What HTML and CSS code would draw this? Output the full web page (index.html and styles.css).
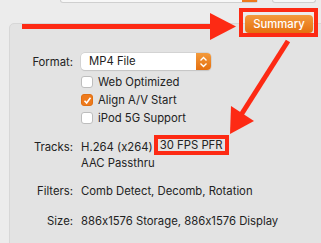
FILE: index.html
```html
<!DOCTYPE html>
<html lang="en">
<head>
    <meta charset="UTF-8">
    <title>Summary</title>
    <link rel="stylesheet" href="styles.css">
</head>
<body>
    <div class="window">
        <div class="top-row">
            <div class="stub stub-wide"><span class="stub-end"></span></div>
            <div class="stub stub-small"></div>
        </div>

        <div class="tab-row">
            <div class="tab-mark">
                <button class="tab-button">Summary</button>
            </div>
        </div>

        <div class="panel">
            <div class="row format-row">
                <span class="label">Format:</span>
                <div class="popup">
                    <span class="popup-text">MP4 File</span>
                    <span class="popup-stepper">
                        <svg width="9" height="12" viewBox="0 0 9 12">
                            <path d="M1.5 4.5 L4.5 1.5 L7.5 4.5 M1.5 7.5 L4.5 10.5 L7.5 7.5" fill="none" stroke="#fff" stroke-width="1.4"/>
                        </svg>
                    </span>
                </div>
            </div>

            <div class="checks">
                <label class="check"><span class="box"></span>Web Optimized</label>
                <label class="check"><span class="box checked">
                    <svg width="9" height="9" viewBox="0 0 9 9"><path d="M1.5 4.8 L3.6 7 L7.5 1.8" fill="none" stroke="#fff" stroke-width="1.6"/></svg>
                </span>Align A/V Start</label>
                <label class="check"><span class="box"></span>iPod 5G Support</label>
            </div>

            <div class="row info-row tracks-row">
                <span class="label">Tracks:</span>
                <div class="value">
                    <div>H.264 (x264) <span class="mark">30 FPS PFR</span></div>
                    <div>AAC Passthru</div>
                </div>
            </div>

            <div class="row info-row">
                <span class="label">Filters:</span>
                <div class="value">Comb Detect, Decomb, Rotation</div>
            </div>

            <div class="row info-row">
                <span class="label">Size:</span>
                <div class="value">886x1576 Storage, 886x1576 Display</div>
            </div>
        </div>

        <!-- annotation arrows -->
        <svg class="arrows" width="321" height="243" viewBox="0 0 321 243">
            <line x1="22" y1="26.5" x2="212" y2="26.5" stroke="#fd2a14" stroke-width="5"/>
            <polygon points="210,13 236,26.5 210,40" fill="#fd2a14"/>
            <line x1="288" y1="41" x2="241" y2="115" stroke="#fd2a14" stroke-width="5"/>
            <polygon points="231,106 254,121 230,134" fill="#fd2a14"/>
        </svg>
    </div>
</body>
</html>
```

FILE: styles.css
```css
body {
    margin: 0;
    background-color: #ececec;
    font-family: Inter, "Noto Sans", sans-serif;
    font-size: 11.3px;
    font-feature-settings: "calt" 0;
    color: #222;
}
.window {
    position: relative;
    width: 321px;
    height: 243px;
    overflow: hidden;
}
.top-row {
    display: flex;
    height: 3px;
    padding-left: 60px;
    gap: 14px;
}
.stub {
    background-color: #f7f7f7;
    border: 1px solid #cfcfcf;
    border-top: none;
    border-radius: 0 0 3px 3px;
    box-sizing: border-box;
    height: 3px;
}
.stub-wide {
    width: 198px;
    display: flex;
    justify-content: flex-end;
}
.stub-end {
    width: 15px;
    background-color: #ee7a1c;
}
.stub-small {
    width: 44px;
}
/* Tab button sits on the panel edge */
.tab-row {
    display: flex;
    justify-content: flex-end;
    padding-right: 3px;
    margin-top: 5px;
    margin-bottom: -14px;
    position: relative;
    z-index: 1;
}
.tab-mark {
    border: 4px solid #fd2a14;
    padding: 3px 1px 0 2px;
    box-sizing: border-box;
    height: 29px;
}
.tab-button {
    display: block;
    width: 68px;
    height: 18px;
    border: none;
    border-radius: 4px;
    background: linear-gradient(#f39a3c, #e5700f);
    color: white;
    font-family: Inter, sans-serif;
    font-size: 11.3px;
    font-weight: 500;
    padding: 0;
}
.panel {
    margin-left: 9px;
    margin-right: -10px;
    height: 240px;
    background-color: #e3e3e3;
    border: 1px solid #d7d7d7;
    border-radius: 5px;
    padding-top: 29px;
}
.row {
    display: flex;
    align-items: flex-start;
}
.label {
    width: 63px;
    margin-right: 8px;
    text-align: right;
    flex-shrink: 0;
}
.format-row {
    height: 17px;
    align-items: center;
}
.popup {
    display: flex;
    width: 130px;
    height: 17px;
    background-color: white;
    border-radius: 4px;
    box-shadow: 0 0 0 0.5px #c4c4c4, 0 1px 1px rgba(0, 0, 0, 0.12);
    align-items: center;
}
.popup-text {
    flex: 1;
    padding-left: 8px;
    line-height: 17px;
}
.popup-stepper {
    width: 15px;
    height: 17px;
    background: linear-gradient(#f39a3c, #e5700f);
    border-radius: 0 4px 4px 0;
    display: flex;
    align-items: center;
    justify-content: center;
}
.checks {
    margin-top: 3px;
    padding-left: 71px;
}
.check {
    display: flex;
    align-items: center;
    height: 18px;
}
.box {
    width: 12px;
    height: 12px;
    margin-right: 5px;
    background-color: white;
    border: 1px solid #bdbdbd;
    border-radius: 3px;
    box-sizing: border-box;
    display: flex;
    align-items: center;
    justify-content: center;
}
.box.checked {
    background-color: #ee7a1c;
    border-color: #e06f12;
}
.info-row {
    line-height: 16px;
    margin-top: 12px;
}
.info-row + .info-row {
    margin-top: 12px;
}
.info-row:last-child {
    margin-top: 14px;
}
.mark {
    display: inline-block;
    border: 4px solid #fd2a14;
    padding: 0 2px;
    line-height: 12px;
    margin: -4px 0 -4px -2px;
    position: relative;
    top: -2px;
}
.arrows {
    position: absolute;
    top: 0;
    left: 0;
    pointer-events: none;
}
```
